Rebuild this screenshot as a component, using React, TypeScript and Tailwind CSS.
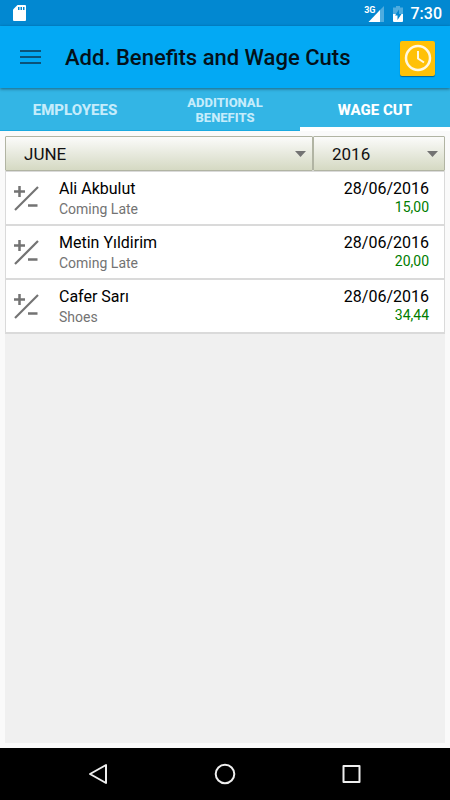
import { useState } from "react"
import clsx from "clsx"

interface WageCut {
  id: number
  name: string
  reason: string
  date: string
  amount: string
}

const TABS = ["EMPLOYEES", "ADDITIONAL BENEFITS", "WAGE CUT"]

const MONTHS = ["JANUARY", "FEBRUARY", "MARCH", "APRIL", "MAY", "JUNE", "JULY", "AUGUST", "SEPTEMBER", "OCTOBER", "NOVEMBER", "DECEMBER"]

const YEARS = ["2014", "2015", "2016", "2017"]

const WAGE_CUTS: WageCut[] = [
  { id: 1, name: "Ali Akbulut", reason: "Coming Late", date: "28/06/2016", amount: "15,00" },
  { id: 2, name: "Metin Yıldirim", reason: "Coming Late", date: "28/06/2016", amount: "20,00" },
  { id: 3, name: "Cafer Sarı", reason: "Shoes", date: "28/06/2016", amount: "34,44" },
]

const StatusBar = () => (
  <div className="flex h-[26px] items-center bg-[#0288d1] pl-[13px] pr-2 text-white">
    <svg className="h-4 w-[13px]" viewBox="0 0 13 16" aria-hidden="true">
      <path fill="#fff" d="M4.5 0H12a1 1 0 0 1 1 1v14a1 1 0 0 1-1 1H1a1 1 0 0 1-1-1V4.5z" />
      <path fill="#0288d1" d="M5 2h1.5v3H5zM7.5 2H9v3H7.5zM10 2h1.5v3H10z" />
    </svg>
    <div className="ml-auto flex items-center pt-0.5">
      <span className="mb-2 text-[9px] leading-none font-bold">3G</span>
      <svg className="-ml-2 h-4 w-4" viewBox="0 0 16 16" aria-hidden="true">
        <path fill="#fff" fillOpacity="0.3" d="M11.500 4.500L16 0v16h-4.500z" />
        <path fill="#fff" d="M0.500 16L12 4v12z" />
      </svg>
      <svg className="ml-[9px] h-4 w-[10px]" viewBox="0 0 10 16" aria-hidden="true">
        <path fill="#fff" fillOpacity="0.3" d="M3 0h4v1.500h3V8H0V1.500h3z" />
        <path fill="#fff" d="M0 8h10v7a1 1 0 0 1-1 1H1a1 1 0 0 1-1-1z" />
        <path fill="#0288d1" d="M6 3.500L2 9.500h2.500V14l4-6H6z" />
      </svg>
      <span className="ml-2 text-base leading-none font-medium">7:30</span>
    </div>
  </div>
)

const AppHeader = () => (
  <header className="relative flex h-[62px] items-center bg-[#03a9f4] pr-[15px] pl-5 shadow-[0_1px_3px_rgba(0,0,0,0.45)]">
    <button type="button" aria-label="Open menu" className="shrink-0">
      <svg className="block h-4 w-[21px]" viewBox="0 0 21 16" aria-hidden="true">
        <path fill="#0b5379" d="M0 1h21v2H0zM0 7h21v2H0zM0 13h21v2H0z" />
      </svg>
    </button>
    <h1 className="ml-6 flex-1 pt-0.5 text-[22px] leading-7 font-medium whitespace-nowrap text-[#04111a]">
      Add. Benefits and Wage Cuts
    </h1>
    <button
      type="button"
      aria-label="Show time records"
      className="mt-0.5 flex h-[35px] w-[35px] items-center justify-center rounded-xs bg-[#ffc107] shadow-[0_1px_1px_rgba(0,0,0,0.4)]"
    >
      <svg className="h-7 w-7" viewBox="0 0 28 28" fill="none" stroke="#fff8e1" aria-hidden="true">
        <circle cx="14" cy="14" r="12" strokeWidth="2.500" />
        <path strokeWidth="2" d="M14 7v7.500l6 4" />
      </svg>
    </button>
  </header>
)

interface DropdownProps {
  label: string
  options: string[]
  value: string
  onChange: (value: string) => void
  className?: string
}

const Dropdown = ({ label, options, value, onChange, className }: DropdownProps) => (
  <div className={clsx("relative", className)}>
    <select
      aria-label={label}
      value={value}
      onChange={(e) => onChange(e.target.value)}
      className="block h-[35px] w-full appearance-none rounded-[1px] border border-[#b1b4a3] bg-linear-to-b from-[#fbfbfa] to-[#d5d9c3] pt-0.5 pr-8 pl-[18px] text-[17px] text-[#111]"
    >
      {options.map((option) => (
        <option key={option}>{option}</option>
      ))}
    </select>
    <svg className="pointer-events-none absolute top-[15px] right-[7px] h-[6px] w-[11px]" viewBox="0 0 11 6" aria-hidden="true">
      <path fill="#737373" d="M0 0h11L5.500 6z" />
    </svg>
  </div>
)

const WageCutRow = ({ item }: { item: WageCut }) => (
  <li className="flex h-[54px] items-start border border-t-0 border-b-2 border-[#dadada] bg-white pr-[15px] pl-2">
    <svg className="mt-[13px] h-[26px] w-[26px]" viewBox="0 0 26 26" stroke="#737373" fill="none" aria-hidden="true">
      <path strokeWidth="2.500" d="M0 6.500h11M5.500 1v11M14 20.500h9.500" />
      <path strokeWidth="2.200" d="M1 25L24 2" />
    </svg>
    <div className="ml-[19px] flex-1">
      <p className="mt-[7px] text-base leading-5 text-black">{item.name}</p>
      <p className="text-sm leading-5 text-[#737373]">{item.reason}</p>
    </div>
    <div className="text-right">
      <p className="mt-[7px] text-base leading-5 text-black">{item.date}</p>
      <p className="text-sm leading-4 text-[#007d00]">{item.amount}</p>
    </div>
  </li>
)

const NavigationBar = () => (
  <nav className="flex h-[52px] items-center justify-center gap-[103px] bg-black">
    <button type="button" aria-label="Back">
      <svg className="block h-6 w-6" viewBox="0 0 24 24" fill="none" stroke="#eee" strokeWidth="2" strokeLinejoin="round" aria-hidden="true">
        <path d="M20 3v18L4 12z" />
      </svg>
    </button>
    <button type="button" aria-label="Home">
      <svg className="block h-6 w-6" viewBox="0 0 24 24" fill="none" stroke="#eee" strokeWidth="2" aria-hidden="true">
        <circle cx="12" cy="12" r="9.300" />
      </svg>
    </button>
    <button type="button" aria-label="Recent apps">
      <svg className="block h-6 w-6" viewBox="0 0 24 24" fill="none" stroke="#eee" strokeWidth="2" strokeLinejoin="round" aria-hidden="true">
        <path d="M3.500 4h16v16h-16z" />
      </svg>
    </button>
  </nav>
)

const App = () => {
  const [activeTab, setActiveTab] = useState("WAGE CUT")
  const [month, setMonth] = useState("JUNE")
  const [year, setYear] = useState("2016")

  return (
    <div className="flex min-h-screen flex-col bg-[#fafafa] font-[Roboto,sans-serif]">
      <StatusBar />
      <AppHeader />

      <div role="tablist" className="grid h-[43px] grid-cols-3 bg-[#33b5e5]">
        {TABS.map((tab) => (
          <button
            key={tab}
            type="button"
            role="tab"
            aria-selected={tab === activeTab}
            onClick={() => setActiveTab(tab)}
            className={clsx(
              "flex items-center justify-center font-extrabold",
              tab.length > 10 ? "px-8 text-[13px] leading-[15px]" : "text-[15px] leading-5",
              tab === activeTab ? "border-b-4 border-white pt-1 text-white" : "border-b border-[#1aa9e0] pt-0.5 text-[#c5ecfb]",
            )}
          >
            {tab}
          </button>
        ))}
      </div>

      <main className="flex flex-1 flex-col p-[5px]">
        <div className="flex">
          <Dropdown label="Month" options={MONTHS} value={month} onChange={setMonth} className="flex-[7]" />
          <Dropdown label="Year" options={YEARS} value={year} onChange={setYear} className="flex-[3]" />
        </div>
        <ul className="flex-1 border-t border-[#dadada] bg-[#f0f0f0]">
          {WAGE_CUTS.map((item) => (
            <WageCutRow key={item.id} item={item} />
          ))}
        </ul>
      </main>

      <NavigationBar />
    </div>
  )
}

export default App
